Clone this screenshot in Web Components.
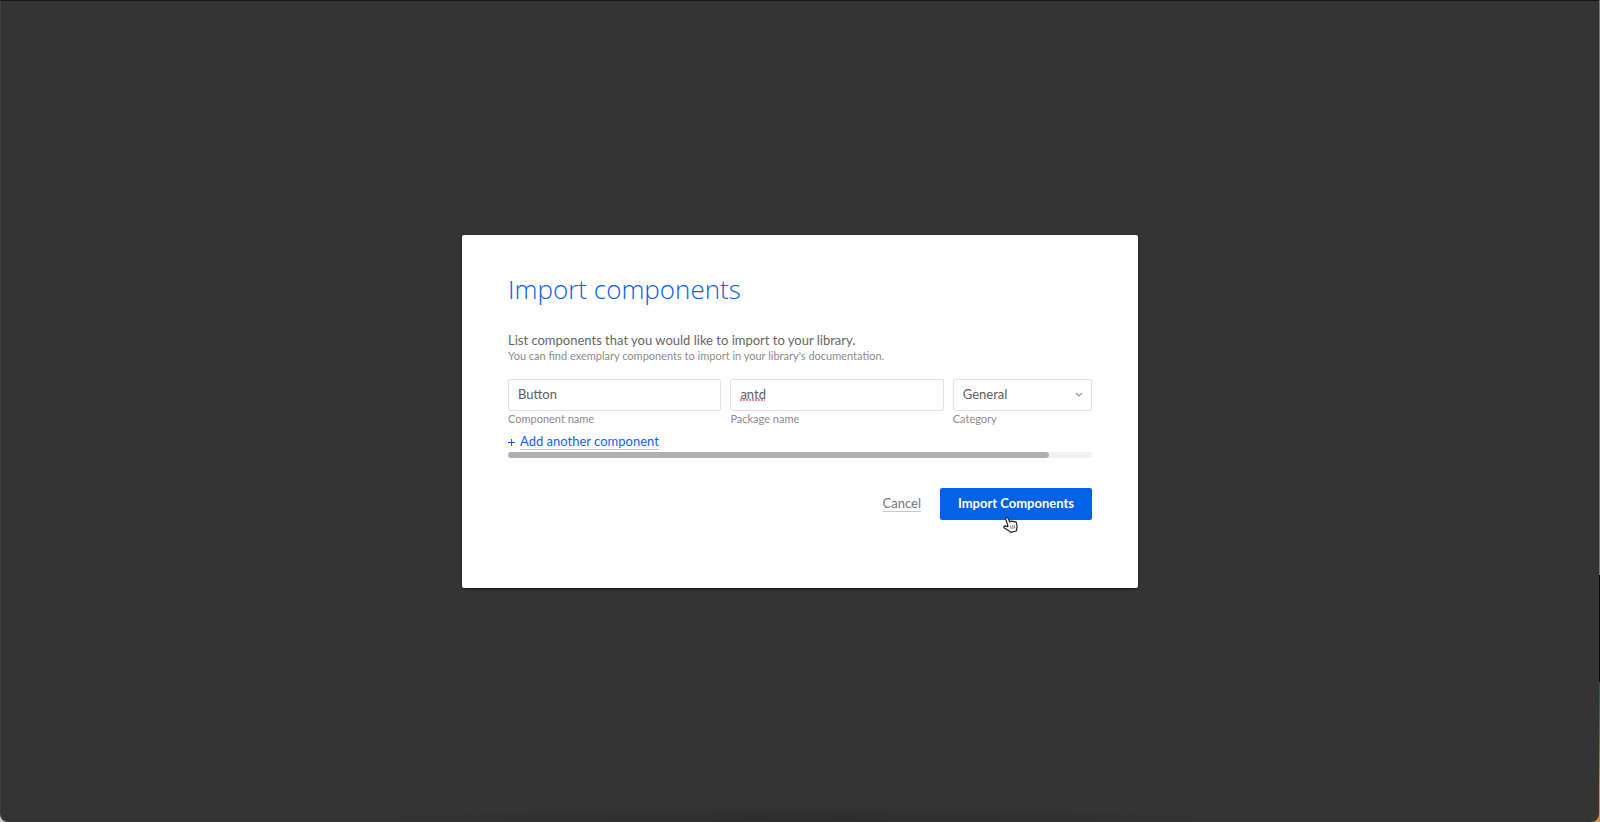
<!DOCTYPE html>
<html lang="en">
<head>
<meta charset="utf-8">
<title>Import components</title>
<style>
html, body { margin: 0; height: 100%; }
body { font-family: "Lato", "Open Sans", sans-serif; color: #666; }
</style>
</head>
<body>
<app-window>
  <import-dialog heading="Import components">
    <span slot="lead">List components that you would like to import to your library.</span>
    <span slot="hint">You can find exemplary components to import in your library's documentation.</span>
    <form-field slot="fields" label="Component name" value="Button"></form-field>
    <form-field slot="fields" label="Package name" value="antd" misspelled></form-field>
    <select-field slot="fields" label="Category" value="General"></select-field>
    <add-link slot="add">Add another component</add-link>
    <scroll-track slot="scroll"></scroll-track>
    <text-button slot="actions">Cancel</text-button>
    <primary-button slot="actions">Import Components<hand-pointer slot="pointer"></hand-pointer></primary-button>
  </import-dialog>
</app-window>
<script>
const define = (name, html, setup) => {
  const template = document.createElement('template');
  template.innerHTML = html;
  customElements.define(name, class extends HTMLElement {
    constructor() {
      super();
      this.attachShadow({ mode: 'open' }).append(template.content.cloneNode(true));
    }
    connectedCallback() { if (setup) setup(this, this.shadowRoot); }
  });
};

define('app-window', `
<style>
:host {
  display: block; box-sizing: border-box; min-height: 100vh; padding-right: 1px;
  background:
    linear-gradient(#c9c9c9, #c9c9c9) left bottom / 20px 20px no-repeat,
    linear-gradient(#777 0 70%, #0a0a0a 70% 83%, #0c5f64 83%, #6b6a4a 90%, #d09343 96%);
}
main {
  box-sizing: border-box; min-height: 100vh; display: grid; place-items: center;
  border-top: 1px solid #161616; border-left: 1px solid #3e3e3e;
  border-radius: 0 0 8px 8px;
  background: radial-gradient(ellipse 30% 16px at 50% 100%, #2c2c2c, #2c2c2c00), #343434;
}
</style>
<main><slot></slot></main>`);

define('import-dialog', `
<style>
:host { display: block; width: min(676px, 92vw); }
section {
  box-sizing: border-box; background: #fff; border-radius: 2px; padding: 36px 46px 68px;
  box-shadow: 0 1px 2px #111;
}
h1 { margin: 0 0 25px; font: 300 26px/36px "Open Sans", sans-serif; color: #0561e6; }
p { margin: 0; }
.lead { font-size: 13px; line-height: 16px; color: #666; }
.hint { font-size: 11px; line-height: 16px; color: #8c8c8c; }
.fields { display: grid; grid-template-columns: 213fr 213fr 139fr; gap: 9px; margin: 15px 0 7px; }
.actions { display: flex; justify-content: flex-end; align-items: center; gap: 19px; margin-top: 30px; }
</style>
<section role="dialog" aria-labelledby="title">
  <h1 id="title"></h1>
  <p class="lead"><slot name="lead"></slot></p>
  <p class="hint"><slot name="hint"></slot></p>
  <div class="fields"><slot name="fields"></slot></div>
  <slot name="add"></slot>
  <slot name="scroll"></slot>
  <div class="actions"><slot name="actions"></slot></div>
</section>`, (host, root) => { root.querySelector('h1').textContent = host.getAttribute('heading'); });

const fieldStyle = `
:host { display: block; min-width: 0; }
.box { position: relative; }
input, select {
  display: block; box-sizing: border-box; width: 100%; height: 32px; margin: 0; padding: 0 9px 2px;
  border: 1px solid #e2e2e2; border-radius: 2px; background: #fff; outline: 0; appearance: none;
  font: 400 13px "Lato", sans-serif; color: #5e5e5e;
}
label { display: block; font-size: 11px; line-height: 16px; color: #8c8c8c; }`;

define('form-field', `
<style>${fieldStyle}
.mark { position: absolute; left: 10px; top: 20px; width: 25px; height: 2px;
  background: repeating-linear-gradient(90deg, #e88a8e 0 2px, #e88a8e00 2px 3px); }
.mark[hidden] { display: none; }
</style>
<div class="box"><input id="control" type="text" spellcheck="false"><span class="mark" hidden></span></div>
<label for="control"></label>`, (host, root) => {
  root.querySelector('label').textContent = host.getAttribute('label');
  root.querySelector('input').value = host.getAttribute('value');
  root.querySelector('.mark').hidden = !host.hasAttribute('misspelled');
});

define('select-field', `
<style>${fieldStyle}
svg { position: absolute; right: 9px; top: 13px; pointer-events: none; }
</style>
<div class="box"><select id="control"><option></option></select>
<svg width="8" height="6" viewBox="0 0 8 6" fill="none" stroke="#999" stroke-width="1.2"><path d="M1 1l3 3 3-3"/></svg></div>
<label for="control"></label>`, (host, root) => {
  root.querySelector('label').textContent = host.getAttribute('label');
  root.querySelector('option').textContent = host.getAttribute('value');
});

define('add-link', `
<style>
:host { display: flex; align-items: center; gap: 5px; font-size: 13px; line-height: 16px; color: #0f66ea; }
a { color: inherit; text-decoration: none; box-shadow: 0 1px #b5cdf5; line-height: 15px; }
</style>
<svg width="7" height="8" viewBox="0 0 7 8" stroke="#0f66ea" fill="none"><path d="M0 4.5h7M3.500 1v7"/></svg>
<a href="#"><slot></slot></a>`);

define('scroll-track', `
<style>
:host { display: block; height: 6px; margin-top: 3px; border-radius: 3px; background: #f1f1f1; }
div { margin-right: 43px; height: 6px; border-radius: 3px; background: #b0b0b0; }
</style>
<div></div>`);

define('text-button', `
<style>
:host { display: block; }
button { display: block; padding: 0; border: 0; border-bottom: 1px solid #c8c8c8; background: none;
  font: 400 13px/15px "Lato", sans-serif; color: #777; }
</style>
<button type="button"><slot></slot></button>`);

define('primary-button', `
<style>
:host { display: block; position: relative; }
button { display: block; width: 152px; height: 32px; padding: 0 0 2px; border: 0; border-radius: 2px;
  background: #0561e6; font: 700 13px "Lato", sans-serif; color: #fff; white-space: nowrap; }
</style>
<button type="button"><slot></slot></button>
<slot name="pointer"></slot>`);

define('hand-pointer', `
<style>
:host { display: block; position: absolute; left: 63px; top: 28px; pointer-events: none; }
svg { display: block; }
</style>
<svg width="15" height="17" viewBox="0 0 15 17">
  <path d="M4.600 8.600 2.700 3.300C2.200 1.500 4.200.6 5 2.300L6.800 6c.2-1.100 1.700-1.200 2.200-.2.5-.8 1.700-.8 2.200.2.8-.6 2-.2 2.200.8.500 2 1.200 4.200.2 6.200L13.400 15 7.600 16.300 6.200 14.900 1.600 12.200C.3 11.200.8 9.700 2.200 9.800L4.900 10.600Z" fill="#fff" stroke="#222" stroke-width="1.200" stroke-linejoin="round"/>
  <path d="M7.600 9.500l.6 3.500M9.500 9.300l.5 3.500M11.300 9l.5 3.500" stroke="#666" stroke-width=".8" fill="none"/>
</svg>`);
</script>
</body>
</html>
